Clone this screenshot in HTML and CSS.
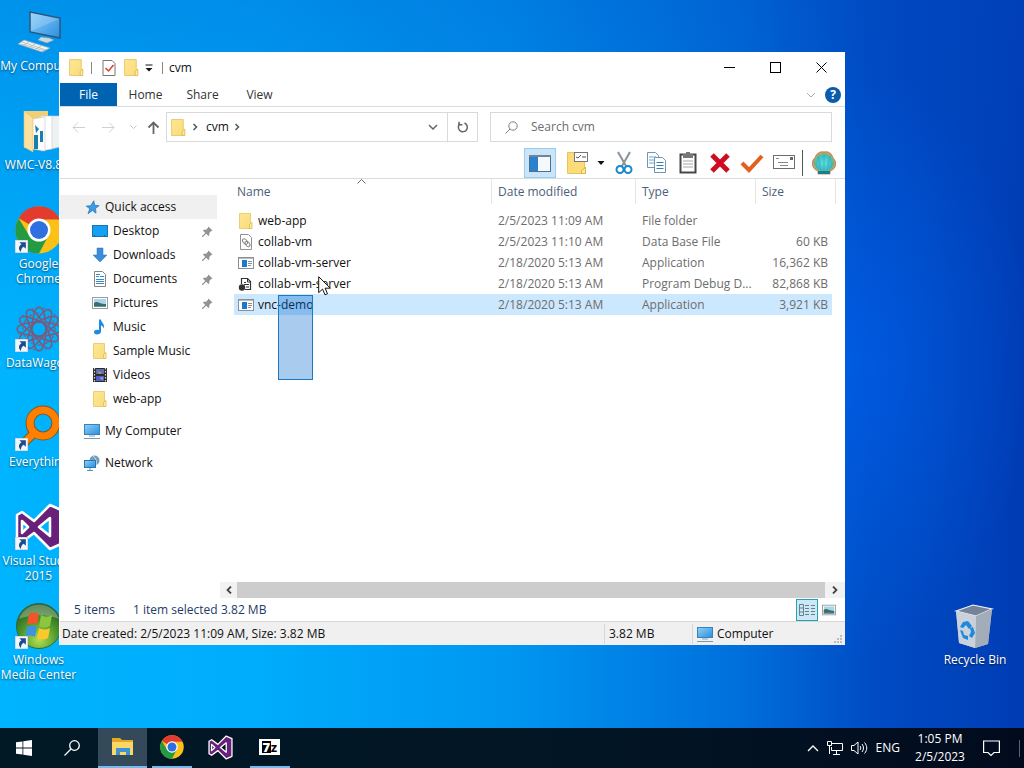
FILE: index.html
```
<!DOCTYPE html>
<html lang="en">
<head>
  <meta charset="UTF-8" />
  <meta name="viewport" content="width=device-width, initial-scale=1.0" />
  <title>cvm</title>
  <link rel="stylesheet" href="styles.css">
</head>
<body>

  <!-- shared icons -->
  <svg class="defs" aria-hidden="true">
    <defs>
      <linearGradient id="gScreen" x1="0" y1="0" x2="1" y2="1">
        <stop offset="0" stop-color="#8fd0f8" /><stop offset="1" stop-color="#2a8ee0" />
      </linearGradient>
      <linearGradient id="gFolder" x1="0" y1="0" x2="1" y2="1">
        <stop offset="0" stop-color="#ffe695" /><stop offset="1" stop-color="#f8dc78" />
      </linearGradient>
      <radialGradient id="gOrb" cx="0.5" cy="0.8" r="0.8">
        <stop offset="0" stop-color="#b4e052" /><stop offset="0.5" stop-color="#4f9a2c" /><stop offset="1" stop-color="#1f5226" />
      </radialGradient>
      <radialGradient id="gShell" cx="0.5" cy="0.5" r="0.5">
        <stop offset="0" stop-color="#5fe0e0" /><stop offset="0.65" stop-color="#3cc0c4" /><stop offset="1" stop-color="#e59a4a" />
      </radialGradient>
    </defs>
    <symbol id="folder" viewBox="0 0 16 16">
      <path d="M1.500 0.500h11V10h1v5.500h-12z" fill="url(#gFolder)" stroke="#e6c560" stroke-width="0.800" />
      <path d="M11.500 11.500l2.500-2v6h-2.500z" fill="#fdeaa3" stroke="#dcb544" stroke-width="0.700" />
    </symbol>
    <symbol id="computer" viewBox="0 0 16 16">
      <rect x="0.500" y="1.500" width="15" height="10" fill="url(#gScreen)" stroke="#3a82b5" />
      <path d="M5 13h6" stroke="#7fa7c0" />
      <path d="M0 15.500h16" stroke="#7b98aa" />
    </symbol>
    <symbol id="app" viewBox="0 0 16 16">
      <rect x="0.500" y="2.500" width="15" height="11" fill="#fff" stroke="#8a8f94" />
      <path d="M1 3.500h14" stroke="#b8bdc2" />
      <rect x="4" y="5" width="5" height="7" fill="#1979ca" />
      <path d="M10 6.500h4M10 8.500h4M10 10.500h3" stroke="#8b9096" />
    </symbol>
    <symbol id="picture" viewBox="0 0 16 16">
      <rect x="0.500" y="2.500" width="15" height="11" fill="#fff" stroke="#9a9a9a" />
      <rect x="2" y="4" width="12" height="8" fill="#a9d4ee" />
      <path d="M2 8c3-3 5 1 12 1v3H2z" fill="#3c6e68" />
      <path d="M2 11h12v1H2z" fill="#5f8fae" />
    </symbol>
    <symbol id="pin" viewBox="0 0 12 12">
      <path d="M7 0.500l4.500 4.500-1.500 0.500-2 2v2.500l-1 1-2.500-2.500L1 12H0v-1l3.500-3.500L1 5l1-1h2.500l2-2z" fill="#8d949a" />
    </symbol>
    <symbol id="chrome" viewBox="0 0 48 48">
      <circle cx="24" cy="24" r="23.500" fill="#fbc116" />
      <path d="M24 24L3.600 12.200A23.500 23.500 0 0 1 44.400 12.200L44.400 13.500H24z" fill="#e33b2e" />
      <path d="M3.600 12.200A23.500 23.500 0 0 0 24 47.500L33.500 29.500 24 24 14.500 30z" fill="#259a45" />
      <circle cx="24" cy="24" r="11.500" fill="#fff" />
      <circle cx="24" cy="24" r="9" fill="#2f6fe0" />
    </symbol>
    <symbol id="vs" viewBox="0 0 48 48">
      <path fill-rule="evenodd" d="M2 12l5-3 12 9L35 2l11 5v34l-11 5L19 30 7 39l-5-3zM7 18v12l6-6zM35 15L24 24l11 9z" fill="#68217a" stroke="#fff" stroke-width="2.500" stroke-linejoin="round" />
    </symbol>
    <symbol id="shortcut" viewBox="0 0 12 12">
      <rect width="12" height="12" fill="#f4f7fa" stroke="#b8c4cf" />
      <path d="M4 2h6v6L8 6.200C6 7.500 5.500 9 5.500 11 3 9 3 6 6 4z" fill="#1d4b8f" />
    </symbol>
  </svg>

  <main class="desktop">
    <nav class="shortcuts" aria-label="Desktop icons">
      <a class="shortcut" href="#">
        <svg class="art" viewBox="0 0 48 48">
          <path d="M15 4l30 6v20l-30-6z" fill="url(#gScreen)" stroke="#2b587c" stroke-width="1.500" />
          <path d="M16 5l28 6-28 12z" fill="#b8e0fb" opacity="0.300" />
          <path d="M26 29l8 1 5 2-7 3-9-3z" fill="#cfd8de" stroke="#8d9ba5" stroke-width="0.500" />
          <path d="M9 32l26 8-8 4L3 36z" fill="#f1f3f4" stroke="#9ba6ad" stroke-width="0.700" />
          <path d="M7 34l24 8M6 36l24 7M14 34l-5 3M20 36l-5 3M26 38l-5 3" stroke="#a5afb6" stroke-width="0.700" />
        </svg>
        <span>My Computer</span>
      </a>
      <a class="shortcut" href="#">
        <svg class="art" viewBox="0 0 48 48">
          <path d="M9 4h24v38l-24-1z" fill="#f2cf74" />
          <path d="M36 9h9v31l-9 2z" fill="#eef1f2" stroke="#c4cacd" stroke-width="0.600" />
          <path d="M26 9h11v33l-11 2z" fill="#fff" stroke="#c4cacd" stroke-width="0.600" />
          <path d="M17 12l13-2v34l-13-2z" fill="#fdfdfd" stroke="#c4cacd" stroke-width="0.600" />
          <path d="M20 18l4 4-3 4zM19 28h4v14h-4zM25 24h3v11h-3z" fill="#1b7fa8" />
          <path d="M9 4l9 7v34l-9-5z" fill="#fbe2a0" stroke="#e2bd62" stroke-width="0.600" />
        </svg>
        <span>WMC-V8.8.5</span>
      </a>
      <a class="shortcut" href="#">
        <svg class="art"><use href="#chrome" /></svg>
        <svg class="badge"><use href="#shortcut" /></svg>
        <span>Google Chrome</span>
      </a>
      <a class="shortcut" href="#">
        <svg class="art" viewBox="0 0 48 48" fill="none" stroke="#7d5877" stroke-width="1.500">
          <ellipse cx="24" cy="24" rx="22" ry="7" />
          <ellipse cx="24" cy="24" rx="22" ry="7" transform="rotate(30 24 24)" />
          <ellipse cx="24" cy="24" rx="22" ry="7" transform="rotate(60 24 24)" />
          <ellipse cx="24" cy="24" rx="22" ry="7" transform="rotate(90 24 24)" />
          <ellipse cx="24" cy="24" rx="22" ry="7" transform="rotate(120 24 24)" />
          <ellipse cx="24" cy="24" rx="22" ry="7" transform="rotate(150 24 24)" />
          <circle cx="24" cy="24" r="16" stroke="#5d6f9c" stroke-dasharray="5 2" />
          <circle cx="24" cy="24" r="21" stroke="#5d6f9c" stroke-dasharray="3 3" />
          <circle cx="24" cy="24" r="9" stroke="#5d6f9c" stroke-dasharray="4 2" />
        </svg>
        <svg class="badge"><use href="#shortcut" /></svg>
        <span>DataWagon</span>
      </a>
      <a class="shortcut" href="#">
        <svg class="art" viewBox="0 0 48 48" fill="none">
          <path d="M19 29L7 41" stroke="#8a5417" stroke-width="9" />
          <circle cx="28" cy="19" r="13" stroke="#8a5417" stroke-width="9" />
          <path d="M19 29L7 41" stroke="#ff8000" stroke-width="7" />
          <circle cx="28" cy="19" r="13" stroke="#ff8000" stroke-width="7" />
        </svg>
        <svg class="badge"><use href="#shortcut" /></svg>
        <span>Everything</span>
      </a>
      <a class="shortcut" href="#">
        <svg class="art"><use href="#vs" /></svg>
        <svg class="badge"><use href="#shortcut" /></svg>
        <span>Visual Studio 2015</span>
      </a>
      <a class="shortcut" href="#">
        <svg class="art" viewBox="0 0 48 48">
          <circle cx="24" cy="24" r="22.500" fill="url(#gOrb)" stroke="#2f6b38" />
          <path d="M4 17a21 21 0 0 1 40 0c-12-5-28-5-40 0z" fill="#d9e8d6" opacity="0.350" />
          <path d="M14 12c4-2 7-2 10 0l-2 11c-4-2-7-2-10 0z" fill="#f0562a" />
          <path d="M26 13c4 2 7 2 11 0l-2 11c-4 2-7 2-11 0z" fill="#8cc63e" />
          <path d="M12 25c3-2 6-2 10 0l-2 10c-4-2-7-2-10 0z" fill="#3f93dd" />
          <path d="M24 26c4 2 7 2 11 0l-2 10c-4 2-8 2-11 0z" fill="#fdc82c" />
        </svg>
        <svg class="badge"><use href="#shortcut" /></svg>
        <span>Windows Media Center</span>
      </a>
    </nav>

    <a class="shortcut bin" href="#">
      <svg class="art" viewBox="0 0 48 48">
        <path d="M5 9l17-6 19 4-4 35-13 4-16-5z" fill="#b9c2cf" />
        <path d="M5 9l17-6 19 4-16 7z" fill="#75839b" stroke="#eef1f5" stroke-width="1.200" />
        <path d="M25 14l16-7-4 35-13 4z" fill="#a3acb9" />
        <path d="M5 9l20 5-1 32-16-5z" fill="#cbd1da" />
        <path d="M12 20l5-1 4 5-3 3-3-4-3 3-3-1zM22 25l2 6-3 5-3-2 2-4-1-4zM9 28l3 1 1 4 4 1v4l-5-2z" fill="#1a8be0" />
      </svg>
      <span>Recycle Bin</span>
    </a>

    <section class="window">
      <header class="titlebar">
        <svg class="i-folder"><use href="#folder" /></svg>
        <i class="bar"></i>
        <button class="quick" aria-label="Properties">
          <svg width="14" height="16" viewBox="0 0 14 16"><path d="M1 0.500h9l3 3v12H1z" fill="#fff" stroke="#777" /><path d="M3.500 8l3 3 5-6" fill="none" stroke="#d5402b" stroke-width="1.500" /></svg>
        </button>
        <button class="quick" aria-label="New folder"><svg class="i-folder"><use href="#folder" /></svg></button>
        <button class="customize" aria-label="Customize"><svg width="8" height="8" viewBox="0 0 8 8"><path d="M0.500 1h7" stroke="#111" /><path d="M0.500 4h7L4 7.500z" fill="#111" /></svg></button>
        <i class="bar"></i>
        <h1>cvm</h1>
        <div class="controls">
          <button aria-label="Minimize"><svg viewBox="0 0 11 11"><path d="M0 5.500h11" /></svg></button>
          <button aria-label="Maximize"><svg viewBox="0 0 11 11"><rect x="0.500" y="0.500" width="10" height="10" /></svg></button>
          <button aria-label="Close"><svg viewBox="0 0 11 11"><path d="M0.500 0.500l10 10M10.500 0.500l-10 10" /></svg></button>
        </div>
      </header>

      <nav class="tabs">
        <button class="file">File</button>
        <button>Home</button>
        <button>Share</button>
        <button>View</button>
        <div class="help">
          <svg width="10" height="6" viewBox="0 0 10 6" fill="none" stroke="#a9a9a9"><path d="M1 1l4 4 4-4" /></svg>
          <svg width="16" height="16" viewBox="0 0 16 16"><circle cx="8" cy="8" r="8" fill="#0a5cad" /><text x="8" y="12" class="q">?</text></svg>
        </div>
      </nav>

      <div class="navbar">
        <div class="history">
          <button aria-label="Back"><svg width="13" height="11" viewBox="0 0 13 11" fill="none" stroke="#cfcfcf"><path d="M13 5.500H1M6 0.500l-5 5 5 5" /></svg></button>
          <button aria-label="Forward"><svg width="13" height="11" viewBox="0 0 13 11" fill="none" stroke="#cfcfcf"><path d="M0 5.500h12M7 0.500l5 5-5 5" /></svg></button>
          <button class="narrow" aria-label="Recent"><svg width="7" height="4" viewBox="0 0 7 4" fill="none" stroke="#c4c4c4"><path d="M0.500 0.500l3 3 3-3" /></svg></button>
          <button class="narrow" aria-label="Up"><svg width="13" height="13" viewBox="0 0 13 13" fill="none" stroke="#666" stroke-width="1.800"><path d="M6.500 13V1.500M1.500 6.500l5-5 5 5" /></svg></button>
        </div>
        <div class="address">
          <svg class="i-folder"><use href="#folder" /></svg>
          <svg class="chev" viewBox="0 0 5 8"><path d="M0.500 1l3 3-3 3" /></svg>
          <button class="crumb">cvm</button>
          <svg class="chev" viewBox="0 0 5 8"><path d="M0.500 1l3 3-3 3" /></svg>
          <button class="drop" aria-label="Previous locations"><svg width="10" height="6" viewBox="0 0 10 6" fill="none" stroke="#666" stroke-width="1.500"><path d="M1 1l4 4 4-4" /></svg></button>
          <button class="refresh" aria-label="Refresh"><svg width="12" height="12" viewBox="0 0 12 12" fill="none" stroke="#666" stroke-width="1.500"><path d="M3 2.700A4.500 4.500 0 1 0 7.500 2" /><path d="M2 0.800v3h3.500" /></svg></button>
        </div>
        <label class="search">
          <svg width="13" height="13" viewBox="0 0 13 13" fill="none" stroke="#808080"><circle cx="8" cy="5" r="4.200" /><path d="M5 8L0.500 12.500" /></svg>
          <input type="text" placeholder="Search cvm" aria-label="Search cvm" />
        </label>
      </div>

      <div class="toolbar">
        <button class="on" aria-label="Navigation pane"><svg viewBox="0 0 24 24"><rect x="1.500" y="4.500" width="21" height="16" fill="#f4f9fd" stroke="#4c7291" /><path d="M1 5h22" stroke="#6f8598" stroke-width="2" /><rect x="2" y="6" width="8" height="14" fill="#2b82cc" /></svg></button>
        <button class="folder-options" aria-label="Folder options"><svg viewBox="0 0 24 24"><path d="M1.500 1.500h17V17l1-1v6.500h-18z" fill="#fbdc78" stroke="#e6c560" /><path d="M15.500 19.500l4-3v6h-4z" fill="#fdeaa3" stroke="#dcb544" /><rect x="8.500" y="1.500" width="13" height="9" fill="#fff" stroke="#777" /><path d="M10 6l2 1 3-3M16 6h4" stroke="#555" fill="none" /></svg></button>
        <button class="caret" aria-label="More options"><svg viewBox="0 0 8 8"><path d="M0.500 2h7L4 6z" fill="#111" /></svg></button>
        <button aria-label="Cut"><svg viewBox="0 0 24 24" fill="none"><path d="M6 1l8 14M18 1l-8 14" stroke="#87939c" stroke-width="2" /><circle cx="8" cy="18.500" r="3.500" stroke="#1689c8" stroke-width="2" /><circle cx="16" cy="18.500" r="3.500" stroke="#1689c8" stroke-width="2" /></svg></button>
        <button aria-label="Copy"><svg viewBox="0 0 24 24" fill="#fff" stroke="#7396b0"><path d="M3.500 1.500h8l3 3v12h-11z" /><path d="M5 6h7M5 9h7M5 12h7" stroke="#68a6d4" /><path d="M10.500 6.500h8l3 3v12h-11z" /><path d="M12.500 11.500h7M12.500 14.500h7M12.500 17.500h7" stroke="#2f7fc0" /></svg></button>
        <button aria-label="Paste"><svg viewBox="0 0 24 24"><rect x="4.500" y="3.500" width="15" height="18" fill="#fff" stroke="#474747" stroke-width="2" /><path d="M7 3h3V1h4v2h3v4H7z" fill="#777" /><path d="M7 10h10M7 13h10M7 16h10" stroke="#a4a4a4" /></svg></button>
        <button aria-label="Delete"><svg viewBox="0 0 24 24"><path d="M4 4l16 16M20 4L4 20" stroke="#cf0d20" stroke-width="5" /></svg></button>
        <button aria-label="Rename"><svg viewBox="0 0 24 24"><path d="M2 12l7 7L22 5" fill="none" stroke="#e2601c" stroke-width="4" /></svg></button>
        <button aria-label="Properties"><svg viewBox="0 0 24 24"><rect x="1.500" y="4.500" width="21" height="13" fill="#fff" stroke="#6d6d6d" /><path d="M4 7.500h3M6 11.500h10M8 14.500h8" stroke="#888" /><rect x="18" y="6" width="3" height="3" fill="#667" /></svg></button>
        <i class="split"></i>
        <button class="shell" aria-label="Shell options"><svg viewBox="0 0 24 24"><path d="M6 20C-1 18-1 9 3 7 4 2 9 0 12 1c4-1 8 1 9 6 4 3 4 11-3 13v3H6z" fill="url(#gShell)" stroke="#b7793d" stroke-width="0.800" /><path d="M12 20V3M9 20L6 5M15 20l3-15M7 19L2 11M17 19l5-8" stroke="#2fabb0" stroke-width="0.700" fill="none" /><path d="M6 20h12v3H6z" fill="#1c7d91" /></svg></button>
      </div>

      <div class="content">
        <aside class="sidebar">
          <ul>
            <li class="root current"><a href="#"><svg viewBox="0 0 18 18"><path d="M11 2l1 5 5 .5-4 3 .5 5.500-4-3-5 3.500 2-5.500-4-3 5-.5z" fill="#3d9be3" stroke="#2374b5" stroke-width="0.800" /></svg>Quick access</a></li>
            <li><a href="#"><svg viewBox="0 0 16 16"><rect x="0.500" y="2.500" width="15" height="11" fill="#16a0f5" stroke="#1872ae" /><path d="M2 12.500h12" stroke="#0b5a94" stroke-dasharray="1 9" /></svg>Desktop</a><svg class="pin"><use href="#pin" /></svg></li>
            <li><a href="#"><svg viewBox="0 0 16 16"><path d="M5 1h6v7h4l-7 7-7-7h4z" fill="#3a8ddb" stroke="#2b74b7" stroke-width="0.500" /></svg>Downloads</a><svg class="pin"><use href="#pin" /></svg></li>
            <li><a href="#"><svg viewBox="0 0 16 16"><path d="M2.500 0.500h8l3 3v12h-11z" fill="#fff" stroke="#858585" /><path d="M4 5.500h3M8 5.500h4M4 8.500h8M4 10.500h8M4 12.500h8M4 3.500h4" stroke="#3b88c4" /></svg>Documents</a><svg class="pin"><use href="#pin" /></svg></li>
            <li><a href="#"><svg><use href="#picture" /></svg>Pictures</a><svg class="pin"><use href="#pin" /></svg></li>
            <li><a href="#"><svg viewBox="0 0 16 16"><path d="M7 0.500h2c0 3 4 4 3 9-1-2-2-3-3-3v6c0 2-2 3-4 3s-3-1-3-2.500S4 10.500 7 11z" fill="#1e8be0" /></svg>Music</a></li>
            <li><a href="#"><svg><use href="#folder" /></svg>Sample Music</a></li>
            <li><a href="#"><svg viewBox="0 0 16 16"><rect x="1" y="1" width="14" height="14" fill="#2b2b2b" /><path d="M2.500 1v14M13.500 1v14" stroke="#ddd" stroke-width="1.200" stroke-dasharray="1.500 1.500" /><rect x="4" y="2" width="8" height="5" fill="#5d6fae" /><rect x="4" y="9" width="8" height="5" fill="#4c5fd0" /><path d="M6 4l4 2-3 1zM7 11l4-1v3z" fill="#b8a45c" /></svg>Videos</a></li>
            <li><a href="#"><svg><use href="#folder" /></svg>web-app</a></li>
            <li class="root spaced"><a href="#"><svg><use href="#computer" /></svg>My Computer</a></li>
            <li class="root spaced"><a href="#"><svg viewBox="0 0 16 16"><circle cx="10.500" cy="5.500" r="5" fill="#6e9fbd" /><path d="M9 1c3 2 4 6 3 9" stroke="#cfe2ee" fill="none" /><rect x="0.500" y="5.500" width="11" height="7" fill="url(#gScreen)" stroke="#2878ad" /><path d="M6 13v2M3 15.500h6" stroke="#5893b5" /></svg>Network</a></li>
          </ul>
        </aside>

        <div class="files">
          <table>
            <thead>
              <tr>
                <th class="name">Name<svg class="sort" viewBox="0 0 9 5"><path d="M0.500 4.500l4-4 4 4" /></svg></th>
                <th class="date">Date modified</th>
                <th class="type">Type</th>
                <th class="size">Size</th>
              </tr>
            </thead>
            <tbody>
              <tr>
                <td><svg><use href="#folder" /></svg>web-app</td><td>2/5/2023 11:09 AM</td><td>File folder</td><td></td>
              </tr>
              <tr>
                <td><svg viewBox="0 0 16 16"><path d="M2.500 0.500h8l3 3v12h-11z" fill="#fff" stroke="#929292" /><ellipse cx="7" cy="7.500" rx="2" ry="3" transform="rotate(-40 7 7.500)" fill="none" stroke="#888" /><ellipse cx="9.500" cy="10" rx="2" ry="3" transform="rotate(-40 9.500 10)" fill="none" stroke="#888" /></svg>collab-vm</td><td>2/5/2023 11:10 AM</td><td>Data Base File</td><td>60 KB</td>
              </tr>
              <tr>
                <td><svg><use href="#app" /></svg>collab-vm-server</td><td>2/18/2020 5:13 AM</td><td>Application</td><td>16,362 KB</td>
              </tr>
              <tr>
                <td><svg viewBox="0 0 16 16"><path d="M3.500 8V2.500h6l3 3v8H7" fill="#fff" stroke="#333" stroke-width="1.200" /><path d="M6 6.500h2M6 8.500h5M8 11h3M9.500 2v4h3" stroke="#333" fill="none" /><circle cx="4" cy="11.500" r="3.200" fill="#333" /></svg>collab-vm-server</td><td>2/18/2020 5:13 AM</td><td>Program Debug D...</td><td>82,868 KB</td>
              </tr>
              <tr class="selected">
                <td><svg><use href="#app" /></svg>vnc-demo</td><td>2/18/2020 5:13 AM</td><td>Application</td><td>3,921 KB</td>
              </tr>
            </tbody>
          </table>
          <div class="marquee"></div>
          <svg class="cursor" viewBox="0 0 13 20"><path d="M0.700 0.700v16l3.800-3.600 2.500 5.700 2.500-1.100-2.400-5.500h5.200z" fill="#fff" stroke="#111" /></svg>
          <div class="scroll">
            <button aria-label="Scroll left"><svg viewBox="0 0 6 8"><path d="M5 0.500L1.500 4 5 7.500" /></svg></button>
            <div class="thumb"></div>
            <button class="right" aria-label="Scroll right"><svg viewBox="0 0 6 8"><path d="M1 0.500L4.500 4 1 7.500" /></svg></button>
          </div>
        </div>
      </div>

      <div class="details">
        <span class="count">5 items</span>
        <span class="picked">1 item selected</span>
        <span>3.82 MB</span>
        <div class="modes">
          <button class="on" aria-label="Details"><svg viewBox="0 0 16 16" fill="none" stroke="#6a7f8c"><path d="M0.500 2.500h4v11h-4zM0.500 6h4M0.500 10h4" /><path d="M6 3.500h4M12 3.500h4M6 6.500h4M12 6.500h4M6 9.500h4M12 9.500h4M6 12.500h4M12 12.500h4" /></svg></button>
          <button aria-label="Large icons"><svg class="thumbs"><use href="#picture" /></svg></button>
        </div>
      </div>

      <footer class="statusbar">
        <span class="info">Date created: 2/5/2023 11:09 AM, Size: 3.82 MB</span>
        <span class="total">3.82 MB</span>
        <span class="zone"><svg><use href="#computer" /></svg>Computer</span>
        <svg class="grip" viewBox="0 0 9 9"><path d="M6 0h2v2H6zM3 3h2v2H3zM6 3h2v2H6zM0 6h2v2H0zM3 6h2v2H3zM6 6h2v2H6z" fill="#bdbdbd" /></svg>
      </footer>
    </section>
  </main>

  <footer class="taskbar">
    <button class="fixed" aria-label="Start"><svg width="16" height="16" viewBox="0 0 16 16" fill="#fff"><path d="M0 2.300l6.500-.9v6.200H0zM7.300 1.300L16 0v7.600H7.300zM0 8.400h6.500v6.200L0 13.700zM7.300 8.400H16V16l-8.700-1.300z" /></svg></button>
    <button class="fixed" aria-label="Search"><svg width="16" height="16" viewBox="0 0 16 16" fill="none" stroke="#fff" stroke-width="1.300"><circle cx="10.500" cy="5.500" r="4.800" /><path d="M7 9L0.500 15.500" /></svg></button>
    <button class="active" aria-label="File Explorer"><svg width="24" height="24" viewBox="0 0 24 24"><path d="M1 3h8l2 2h11v4H1z" fill="#e6a823" /><path d="M1 7h21v13H1z" fill="#fbd767" /><path d="M5 20v-7h14v7h-4v-3H9v3z" fill="#3f93d2" /></svg></button>
    <button class="open" aria-label="Google Chrome"><svg width="24" height="24"><use href="#chrome" /></svg></button>
    <button aria-label="Visual Studio"><svg width="25" height="25"><use href="#vs" /></svg></button>
    <button class="open" aria-label="7-Zip"><span class="zip"><b>7</b>z</span></button>

    <div class="tray">
      <svg width="12" height="7" viewBox="0 0 12 7" fill="none" stroke="#fff" stroke-width="1.300"><path d="M1 6l5-5 5 5" /></svg>
      <svg width="16" height="14" viewBox="0 0 16 14" fill="none" stroke="#fff"><path d="M5 2.500h10.500v7H4.500V6M9.500 10v3M6 13.500h7" /><path d="M0.500 0.500h4v4h-4zM2.500 5v8" /></svg>
      <svg width="17" height="14" viewBox="0 0 17 14" fill="none" stroke="#fff"><path d="M0.500 4.500h2.500l4-3.500v12L3 9.500H0.500z" /><path d="M9 5c1 1 1 3 0 4M11 3c2 2.500 2 5.500 0 8M13.500 1.500c3 3.500 3 7.500 0 11" /></svg>
      <span class="lang">ENG</span>
      <time>1:05 PM<br>2/5/2023</time>
      <svg class="notify" width="17" height="17" viewBox="0 0 17 17" fill="none" stroke="#fff" stroke-width="1.200"><path d="M0.600 1h15.800v11.500H11l-3 3-3-3H0.600z" /></svg>
    </div>
  </footer>

</body>
</html>
```

FILE: styles.css
```
* {
  box-sizing: border-box;
}

html, body {
  height: 100%;
}

body {
  margin: 0;
  display: flex;
  flex-direction: column;
  overflow: hidden;
  font-family: "Open Sans", "Noto Sans", sans-serif;
  font-size: 12px;
  line-height: 16px;
  color: #111;
}

button {
  display: flex;
  align-items: center;
  justify-content: center;
  padding: 0;
  border: 0;
  background: none;
  font: inherit;
  color: inherit;
}

a {
  color: inherit;
  text-decoration: none;
}

svg {
  display: block;
  flex: none;
}

.defs {
  position: absolute;
  width: 0;
  height: 0;
}

.i-folder {
  width: 17px;
  height: 17px;
}

/* desktop */
.desktop {
  flex: 1;
  position: relative;
  background:
    radial-gradient(ellipse 180px 300px at 83% 50%, rgba(0, 98, 240, 0.6), rgba(0, 98, 240, 0)),
    linear-gradient(to bottom, rgba(0, 70, 190, 0.3), rgba(0, 70, 190, 0) 50%),
    linear-gradient(to right, #00b4ff 0%, #00acfc 25%, #0096f0 50%, #0070dc 72%, #004cc4 85%, #003cb4 100%);
}

.shortcuts {
  width: 77px;
}

.shortcut {
  position: relative;
  display: flex;
  flex-direction: column;
  align-items: center;
  height: 99px;
  padding-top: 8px;
  color: #fff;
  text-align: center;
  line-height: 15px;
  text-shadow: 0 1px 2px rgba(0, 0, 0, 0.6);
}

.shortcut .art {
  width: 48px;
  height: 48px;
  margin-bottom: 2px;
}

.shortcut .badge {
  position: absolute;
  left: 15px;
  top: 42px;
  width: 13px;
  height: 13px;
}

.bin {
  position: absolute;
  right: 10px;
  bottom: 35px;
  width: 78px;
}

/* explorer window */
.window {
  position: absolute;
  inset: 52px 179px 83px 59px;
  display: flex;
  flex-direction: column;
  padding-left: 1px;
  background: #fff;
}

.titlebar {
  display: flex;
  align-items: center;
  height: 31px;
  padding-left: 8px;
}

.bar {
  width: 1px;
  height: 12px;
  margin: 0 6px;
  background: #888;
}

.quick {
  width: 22px;
}

.customize {
  width: 14px;
}

.titlebar h1 {
  margin: 0;
  font-size: 12px;
  font-weight: normal;
}

.controls {
  display: flex;
  margin-left: auto;
  padding-right: 1px;
}

.controls button {
  width: 46px;
  height: 30px;
}

.controls svg {
  width: 11px;
  height: 11px;
  fill: none;
  stroke: #000;
}

.tabs {
  display: flex;
  height: 24px;
  border-bottom: 1px solid #dadbdc;
  color: #333;
}

.tabs button {
  width: 57px;
}

.tabs .file {
  background: #0063b1;
  color: #fff;
}

.help {
  display: flex;
  align-items: center;
  gap: 9px;
  margin-left: auto;
  padding-right: 4px;
}

.q {
  fill: #fff;
  font-size: 12px;
  font-weight: bold;
  text-anchor: middle;
}

.navbar {
  display: flex;
  align-items: center;
  height: 40px;
  padding-right: 13px;
}

.history {
  display: flex;
  width: 106px;
  padding-left: 3px;
}

.history button {
  width: 30px;
  height: 30px;
}

.history .narrow {
  width: 20px;
}

.address, .search {
  display: flex;
  align-items: center;
  height: 30px;
  border: 1px solid #d9d9d9;
}

.address {
  flex: 1 1 312px;
  margin-right: 12px;
  padding-left: 3px;
}

.chev {
  width: 5px;
  height: 8px;
  margin: 0 8px 0 6px;
  fill: none;
  stroke: #555;
  stroke-width: 1.5px;
}

.drop {
  width: 28px;
  height: 28px;
  margin-left: auto;
}

.refresh {
  width: 30px;
  height: 28px;
  border-left: 1px solid #d9d9d9;
}

.search {
  flex: 1 1 342px;
  padding-left: 14px;
  gap: 13px;
}

.search input {
  flex: 1;
  min-width: 0;
  padding: 0;
  border: 0;
  outline: 0;
  background: none;
  font: inherit;
}

.search input::placeholder {
  color: #6d6d6d;
  opacity: 1;
}

.toolbar {
  display: flex;
  align-items: center;
  justify-content: flex-end;
  height: 32px;
  padding-right: 5px;
  border-bottom: 1px solid #dadbdc;
}

.toolbar button {
  width: 32px;
  height: 30px;
}

.toolbar svg {
  width: 24px;
  height: 24px;
}

.toolbar .on {
  background: #cce4f7;
  border: 1px solid #99cdec;
}

.toolbar .folder-options {
  margin-left: 6px;
}

.toolbar .caret {
  width: 14px;
}

.toolbar .caret svg {
  width: 8px;
  height: 8px;
}

.split {
  width: 1px;
  height: 26px;
  margin: 0 5px 0 2px;
  background: #555;
}

.content {
  flex: 1;
  display: flex;
  min-height: 0;
}

/* navigation pane */
.sidebar {
  width: 160px;
  padding: 16px 3px 0 0;
}

.sidebar ul {
  margin: 0;
  padding: 0;
  list-style: none;
}

.sidebar li {
  display: flex;
  align-items: center;
  justify-content: space-between;
  height: 24px;
  padding: 0 4px 0 32px;
}

.sidebar a {
  display: flex;
  align-items: center;
  gap: 5px;
  white-space: nowrap;
}

.sidebar svg {
  width: 16px;
  height: 16px;
}

.sidebar .root {
  padding-left: 24px;
}

.sidebar .current {
  background: #f0f0f0;
}

.sidebar .spaced {
  margin-top: 8px;
}

.sidebar .pin {
  width: 11px;
  height: 11px;
}

/* file list */
.files {
  position: relative;
  flex: 1;
  display: flex;
  flex-direction: column;
  padding: 0 9px 0 14px;
}

table {
  width: 100%;
  table-layout: fixed;
  border-spacing: 0;
}

th {
  position: relative;
  height: 25px;
  padding: 0 6px;
  border-right: 1px solid #e5e5e5;
  color: #4c607a;
  font-weight: normal;
  text-align: left;
}

.name {
  padding-left: 3px;
}

.date {
  width: 144px;
}

.type {
  width: 120px;
}

.size {
  width: 80px;
}

.sort {
  position: absolute;
  left: 48%;
  top: 0;
  width: 9px;
  height: 5px;
  fill: none;
  stroke: #666;
}

tbody::before {
  content: "";
  display: block;
  height: 6px;
}

td {
  height: 21px;
  padding: 0 6px;
  color: #6d6d6d;
  white-space: nowrap;
}

td:first-child {
  padding-left: 4px;
  color: #111;
}

td:last-child {
  padding-right: 4px;
  border-right: 4px solid transparent;
  background-clip: padding-box;
  text-align: right;
}

td svg {
  display: inline-block;
  width: 16px;
  height: 16px;
  margin-right: 4px;
  vertical-align: top;
}

.selected td {
  background-color: #cce8ff;
}

.marquee {
  position: absolute;
  left: 58px;
  top: 116px;
  width: 35px;
  height: 85px;
  border: 1px solid #1b7ac2;
  background: rgba(0, 102, 204, 0.34);
}

.cursor {
  position: absolute;
  left: 98px;
  top: 97px;
  width: 13px;
  height: 20px;
}

.scroll {
  display: flex;
  height: 16px;
  margin: auto -9px 0 -14px;
  background: #f2f2f2;
}

.scroll button {
  width: 17px;
}

.scroll .right {
  width: 20px;
}

.scroll svg {
  width: 6px;
  height: 8px;
  fill: none;
  stroke: #444;
  stroke-width: 1.8px;
}

.thumb {
  flex: 1;
  background: #cdcdcd;
}

.details {
  display: flex;
  align-items: center;
  height: 23px;
  padding: 0 5px 0 14px;
  color: #243b66;
}

.count {
  width: 59px;
}

.picked {
  width: 88px;
  white-space: nowrap;
}

.modes {
  display: flex;
  margin-left: auto;
}

.modes button {
  width: 22px;
  height: 22px;
}

.modes svg {
  width: 16px;
  height: 16px;
}

.modes .thumbs {
  width: 14px;
  height: 14px;
}

.modes .on {
  background: #cbe8f6;
  border: 1px solid #26a0b4;
}

.statusbar {
  position: relative;
  display: flex;
  align-items: center;
  height: 24px;
  padding-left: 2px;
  border-top: 1px solid #d7d7d7;
  background: #f0f0f0;
}

.info {
  flex: 1;
}

.total, .zone {
  display: flex;
  align-items: center;
  gap: 4px;
  height: 20px;
  padding-left: 4px;
  border-left: 1px solid #d7d7d7;
}

.total {
  width: 88px;
}

.zone {
  width: 153px;
}

.zone svg {
  width: 16px;
  height: 16px;
}

.grip {
  position: absolute;
  right: 2px;
  bottom: 1px;
  width: 9px;
  height: 9px;
}

/* taskbar */
.taskbar {
  display: flex;
  height: 40px;
  background: linear-gradient(to right, #011825, #021524 60%, #020b1e);
  color: #fff;
}

.taskbar button {
  width: 49px;
  border-bottom: 2px solid transparent;
}

.taskbar .fixed {
  width: 48px;
  border: 0;
}

.taskbar .active {
  margin-left: 2px;
  background: #34495a;
  border-color: #76b9ed;
}

.taskbar .open {
  background: linear-gradient(#76b9ed, #76b9ed) center bottom / 40px 2px no-repeat border-box;
}

.zip {
  display: flex;
  align-items: center;
  justify-content: center;
  width: 21px;
  height: 16px;
  border: 2px solid #fff;
  background: #fff;
  color: #000;
  font-size: 13px;
  font-weight: bold;
  line-height: 12px;
}

.zip b {
  width: 9px;
  background: #000;
  color: #fff;
}

.tray {
  display: flex;
  align-items: center;
  gap: 8px;
  margin-left: auto;
  padding-right: 4px;
}

.tray time {
  width: 64px;
  line-height: 18px;
  text-align: center;
}

.notify {
  box-sizing: content-box;
  padding: 0 19px 0 3px;
  border-right: 1px solid #59636e;
}
```
